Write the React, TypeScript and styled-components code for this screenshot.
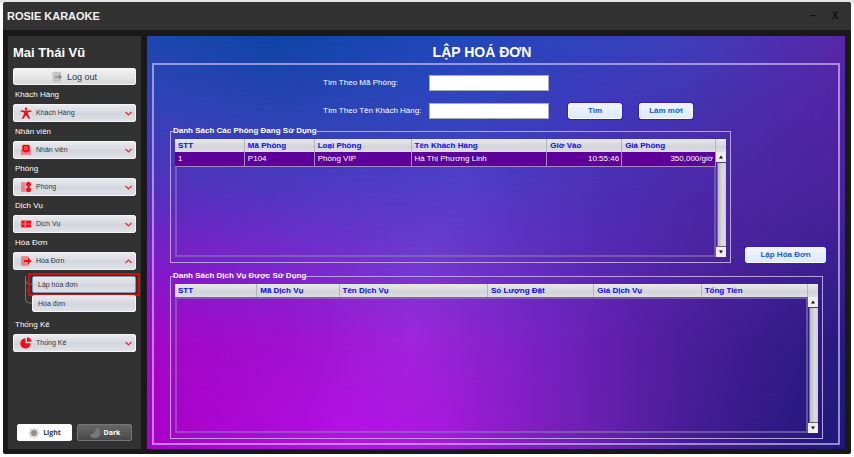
import React from "react";
import styled, { createGlobalStyle, css } from "styled-components";

const GlobalStyle = createGlobalStyle`
  *, *::before, *::after { box-sizing: border-box; }
  body { margin: 0; background: #fdfdfd; font: 8px/10px "Liberation Sans", Arial, sans-serif; color: #fff; }
  button, input { font: inherit; margin: 0; }
  button { cursor: pointer; }
`;

const Page = styled.div`
  min-height: 100vh;
  display: flex;
  padding: 2px 3px 3px;
  background: linear-gradient(#e6e6e6, #e6e6e6) top / 100% 3px no-repeat;
`;

const AppWindow = styled.div`
  flex: 1;
  display: flex;
  flex-direction: column;
  background: #191919;
  border-radius: 3px 3px 2px 2px;
  overflow: hidden;
`;

const TitleBar = styled.header`
  display: flex;
  align-items: center;
  justify-content: space-between;
  height: 28px;
  padding: 0 10px 0 4px;
  background: #323232;
`;

const AppName = styled.span`
  font-size: 11px;
  line-height: 14px;
  font-weight: bold;
  color: #f2f2f2;
`;

const WindowButtons = styled.div`
  display: flex;
  gap: 10px;
`;

const WindowButton = styled.button`
  width: 12px;
  padding: 0;
  border: 0;
  background: none;
  color: #111;
  font-size: 10px;
  line-height: 12px;
  font-weight: bold;
`;

const Body = styled.div`
  flex: 1;
  display: flex;
  gap: 6px;
  padding: 6px 6px 5px 5px;
`;

const Sidebar = styled.nav`
  flex: 0 0 133px;
  display: flex;
  flex-direction: column;
  padding: 9px 5px 8px;
  background: #323232;
`;

const UserName = styled.h2`
  margin: 0 0 7px;
  font-size: 13px;
  line-height: 16px;
  font-weight: bold;
`;

const softSurface = css`
  border: 1px solid #f4f5f7;
  border-radius: 2px;
  background: linear-gradient(#e9eaee, #d3d6dd 55%, #dfe1e6);
  color: #333a44;
`;

const LogoutButton = styled.button`
  ${softSurface}
  display: flex;
  align-items: center;
  justify-content: center;
  gap: 4px;
  height: 17px;
  padding: 0;
  background: linear-gradient(#f2f2f2, #d9d9d9);
  font-size: 9px;
  color: #2b3a48;
`;

const Group = styled.section`
  display: flex;
  flex-direction: column;
  padding-top: 5px;
`;

const GroupLabel = styled.h3`
  margin: 0 0 4px 2px;
  font-size: 8px;
  line-height: 10px;
  font-weight: normal;
`;

const MenuButton = styled.button`
  ${softSurface}
  display: flex;
  align-items: center;
  gap: 4px;
  height: 18px;
  padding: 0 3px 0 6px;
  font-size: 7px;
  text-align: left;
`;

const MenuText = styled.span`
  flex: 1;
`;

const SubMenu = styled.div`
  display: grid;
  grid-template-columns: 19px 1fr;
  padding: 6px 0 3px;
`;

const SubButtons = styled.div`
  display: flex;
  flex-direction: column;
  gap: 2px;
`;

const SubButton = styled.button<{ $active?: boolean }>`
  ${softSurface}
  position: relative;
  height: 17px;
  padding: 0 5px;
  font-size: 7px;
  text-align: left;
  ${(p) =>
    p.$active &&
    css`
      border-color: #7d9cb4;

      &::after {
        content: "";
        position: absolute;
        inset: -4px -5px;
        border: 2px solid #dc0a0a;
      }
    `}
`;

const ThemeRow = styled.div`
  display: grid;
  grid-template-columns: 1fr 1fr;
  gap: 5px;
  margin-top: auto;
  padding: 0 4px;
`;

const ThemeButton = styled.button<{ $dark?: boolean }>`
  display: flex;
  align-items: center;
  justify-content: center;
  gap: 3px;
  height: 17px;
  padding: 0;
  border: 1px solid ${(p) => (p.$dark ? "#777" : "#fff")};
  border-radius: 2px;
  background: ${(p) => (p.$dark ? "linear-gradient(#686868, #484848)" : "#fff")};
  color: ${(p) => (p.$dark ? "#fff" : "#2b3a48")};
  font: bold 7px/10px "Open Sans", sans-serif;
`;

const Main = styled.main`
  position: relative;
  isolation: isolate;
  flex: 1;
  min-width: 0;
  display: flex;
  flex-direction: column;
  padding: 8px 5px 4px;
`;

const Band = styled.div<{ $colors: string; $from: number; $to: number }>`
  position: absolute;
  inset: 0;
  z-index: -1;
  background: linear-gradient(90deg, ${(p) => p.$colors});
  mask-image: linear-gradient(transparent ${(p) => p.$from}%, #000 ${(p) => p.$to}%);
`;

const PageTitle = styled.h1`
  margin: 0;
  padding-right: 28px;
  font-size: 14px;
  line-height: 16px;
  font-weight: bold;
  text-align: center;
`;

const Content = styled.div`
  flex: 1;
  display: flex;
  flex-direction: column;
  margin-top: 3px;
  padding: 10px 12px 4px 16px;
  border: 2px solid rgba(205, 185, 235, 0.7);
`;

const SearchForm = styled.form`
  display: grid;
  grid-template-columns: 106px 120px 54px 54px;
  justify-content: center;
  align-items: center;
  row-gap: 12px;
  padding-right: 16px;
`;

const Field = styled.input`
  height: 16px;
  padding: 0 3px;
  border: 1px solid #a9a9b8;
  background: #fff;
  color: #222;
`;

const ActionButton = styled.button`
  height: 16px;
  padding: 0;
  border: 1px solid #fff;
  border-radius: 2px;
  outline: 1px solid #2a1fd0;
  background: linear-gradient(#f1f5ff, #dde9ff);
  color: #0d5fd8;
  font-weight: bold;
`;

const FormButton = styled(ActionButton)<{ $gap: number }>`
  margin-left: ${(p) => p.$gap}px;
  width: 54px;
`;

const RoomRow = styled.div`
  flex: 137 1 0;
  display: flex;
  gap: 14px;
  margin-top: 7px;
`;

const CreateButton = styled(ActionButton)`
  flex: 0 0 81px;
  align-self: flex-end;
`;

const Panel = styled.fieldset`
  flex: 1;
  min-width: 0;
  margin: 0;
  padding: 3px 4px 5px;
  border: 1px solid #b9a2dc;
`;

const ServicePanel = styled(Panel)`
  flex: 157 1 0;
  margin: 8px 3px 0 0;
`;

const Legend = styled.legend`
  margin-left: -2px;
  padding: 0;
  font-weight: bold;
`;

const Grid = styled.div`
  height: 100%;
  display: grid;
  grid-template-columns: 1fr 10px;
`;

const TableArea = styled.div`
  display: flex;
  flex-direction: column;
`;

const Table = styled.table`
  width: 100%;
  table-layout: fixed;
  border-collapse: separate;
  border-spacing: 0;
`;

const HeadCell = styled.th`
  height: 13px;
  padding: 0 3px;
  border-right: 1px solid #b4b6bc;
  background: linear-gradient(#e9eaee, #d2d4d9 60%, #dcdee2);
  color: #0a0af0;
  text-align: left;
  white-space: nowrap;
`;

const Cell = styled.td<{ $end?: boolean }>`
  height: 15px;
  padding: 0 2px 0 3px;
  border-right: 1px solid #a487c9;
  border-bottom: 1px solid #a487c9;
  background: #5c0099;
  text-align: ${(p) => (p.$end ? "right" : "left")};
  white-space: nowrap;
`;

const EmptyArea = styled.div<{ $top?: boolean }>`
  flex: 1;
  border: 2px solid rgba(140, 120, 185, 0.6);
  border-top-width: ${(p) => (p.$top ? "2px" : "0")};
`;

const ScrollColumn = styled.div`
  display: flex;
  flex-direction: column;
`;

const ScrollHead = styled.div`
  height: 13px;
  background: linear-gradient(#e9eaee, #d2d4d9 60%, #dcdee2);
`;

const ScrollButton = styled.button`
  display: flex;
  align-items: center;
  justify-content: center;
  height: 10px;
  padding: 0;
  border: 0;
  background: #eeeef0;
`;

const ScrollTrack = styled.div`
  flex: 1;
  margin-left: 1px;
  border-left: 1px solid #77777f;
  border-top: 1px solid #44444c;
  border-bottom: 1px solid #66666c;
  background: linear-gradient(90deg, #b9bac0, #dcdde1 60%, #cfd0d6);
`;

const bands = [
  { from: -1, to: 0, colors: "#1c48b0, #0e44a6 18%, #2048bc 45%, #3c40bc 75%, #5a26a8" },
  { from: 0, to: 20, colors: "#3840b8, #2c44b4 20%, #3444c0 45%, #4038bc 62%, #4630ac 80%, #5222a4" },
  { from: 20, to: 37, colors: "#5430bc, #5038c0 20%, #543ec8 45%, #4a2eb2 68%, #4c26a4 85%, #4a229c" },
  { from: 37, to: 54, colors: "#7c1cc8, #7828cc 20%, #703ad0 40%, #5a2ab8 62%, #4a229c 82%, #3a2090" },
  { from: 54, to: 74, colors: "#a406c8, #a010d0 20%, #a024dc 38%, #7c22c4 55%, #561ea4 72%, #3a1c8c 88%, #281a80" },
  { from: 74, to: 100, colors: "#a800c8, #b810e8 30%, #a816dc 43%, #7020b4 62%, #401c90 80%, #1c1878" },
];

const Chevron = ({ up }: { up?: boolean }) => (
  <svg width="7" height="5" viewBox="0 0 7 5" fill="none" stroke="#f02828" strokeWidth="1.2" aria-hidden>
    <path d={up ? "M.5 4 3.5 1l3 3" : "M.5 1l3 3 3-3"} />
  </svg>
);

const MenuIcon = ({ name }: { name: string }) => (
  <svg width="12" height="12" viewBox="0 0 12 12" fill="#fa0a14" aria-hidden>
    {name === "person" && (
      <>
        <circle cx="6" cy="1.7" r="1.2" />
        <path d="M.5 3.4h11v1.2L7.8 5.4l.4 2.2 2 4-1.3.3L6 8.3l-2.9 3.6-1.3-.3 2-4 .4-2.2L.5 4.6z" />
      </>
    )}
    {name === "staff" && (
      <>
        <path d="M.8 5.5h10.4V10a1 1 0 0 1-1 1H1.8a1 1 0 0 1-1-1z" opacity=".4" />
        <path d="M3.5.7h5A1.3 1.3 0 0 1 9.8 2v4.5L8 8.3H4L2.200 6.500V2A1.300 1.300 0 0 1 3.500.7z" />
        <path d="M4 3.200h4M4 5.200h4" stroke="#ffb0b0" strokeWidth=".7" />
      </>
    )}
    {name === "room" && (
      <>
        <rect x="1" y="1" width="4.500" height="10" rx="1" opacity=".4" />
        <circle cx="8.500" cy="3.200" r="2.500" />
        <circle cx="8.500" cy="8.800" r="2.500" />
        <path d="M7.800 4h1.400v4H7.800z" />
      </>
    )}
    {name === "service" && (
      <>
        <rect x=".8" y="2" width="10.400" height="8" rx="1" opacity=".45" />
        <path d="M1.500 3h3v2.400h-3zM1.500 6.600h3V9h-3zM6 3h5v2.400H6zM6 6.600h5V9H6z" />
      </>
    )}
    {name === "exit" && (
      <>
        <rect x="1" y="1" width="8" height="10" rx="1.500" opacity=".4" />
        <path d="M4 5h4V2.800L11.500 6 8 9.200V7H4z" />
      </>
    )}
    {name === "chart" && (
      <>
        <path d="M5.500 1.200v5h5.200A5.200 5.200 0 1 1 5.500 1.200z" />
        <path d="M7 .3a4.800 4.800 0 0 1 4.500 4.500H7z" />
      </>
    )}
  </svg>
);

const LogoutIcon = () => (
  <svg width="11" height="12" viewBox="0 0 11 12" aria-hidden>
    <rect x=".5" y=".8" width="8.500" height="10.400" rx="1" fill="#c4c4c4" />
    <path d="M3 5.200h4V3.200L10.200 6 7 8.800v-2H3z" fill="#8b8b8b" />
  </svg>
);

const SunIcon = () => (
  <svg width="12" height="12" viewBox="0 0 12 12" aria-hidden>
    <path
      d="M6 0l1.300 2.200L10.200 1.800 9.800 4.700 12 6 9.800 7.300l.4 2.900-2.900-.4L6 12 4.700 9.800l-2.900.4.4-2.900L0 6l2.200-1.300-.4-2.900 2.900.4z"
      fill="#d4d4d4"
    />
    <circle cx="6" cy="6" r="2.900" fill="#8f8f8f" />
  </svg>
);

const MoonIcon = () => (
  <svg width="12" height="12" viewBox="0 0 12 12" aria-hidden>
    <path d="M7 .5A6 6 0 0 1 .8 7.200 5.400 5.400 0 1 0 7 .5z" fill="#777" />
  </svg>
);

const Arrow = ({ up }: { up?: boolean }) => (
  <svg width="4" height="4" viewBox="0 0 4 4" aria-hidden>
    <path d={up ? "M0 3.500 2 .5l2 3z" : "M0 .5h4l-2 3z"} fill="#111" />
  </svg>
);

const Branches = () => (
  <svg width="19" height="36" viewBox="0 0 19 36" fill="none" stroke="#777" aria-hidden>
    <path d="M12.500 0v23q0 4 4 4H19M12.500 4q0 4 4 4H19" />
  </svg>
);

const Scrollbar = () => (
  <ScrollColumn>
    <ScrollHead />
    <ScrollButton type="button" aria-label="Cuộn lên">
      <Arrow up />
    </ScrollButton>
    <ScrollTrack />
    <ScrollButton type="button" aria-label="Cuộn xuống">
      <Arrow />
    </ScrollButton>
  </ScrollColumn>
);

type Column = { title: string; width: number; end?: boolean };

const DataGrid = ({ columns, rows }: { columns: Column[]; rows: string[][] }) => {
  const total = columns.reduce((sum, c) => sum + c.width, 0);
  return (
    <Grid>
      <TableArea>
        <Table>
          <colgroup>
            {columns.map((c) => (
              <col key={c.title} style={{ width: `${(c.width / total) * 100}%` }} />
            ))}
          </colgroup>
          <thead>
            <tr>
              {columns.map((c) => (
                <HeadCell key={c.title} scope="col">
                  {c.title}
                </HeadCell>
              ))}
            </tr>
          </thead>
          <tbody>
            {rows.map((row) => (
              <tr key={row[0]}>
                {row.map((value, i) => (
                  <Cell key={columns[i].title} $end={columns[i].end}>
                    {value}
                  </Cell>
                ))}
              </tr>
            ))}
          </tbody>
        </Table>
        <EmptyArea $top={rows.length === 0} />
      </TableArea>
      <Scrollbar />
    </Grid>
  );
};

const roomColumns: Column[] = [
  { title: "STT", width: 70 },
  { title: "Mã Phòng", width: 70 },
  { title: "Loại Phòng", width: 97 },
  { title: "Tên Khách Hàng", width: 136 },
  { title: "Giờ Vào", width: 75, end: true },
  { title: "Giá Phòng", width: 94, end: true },
];

const serviceColumns: Column[] = [
  { title: "STT", width: 82 },
  { title: "Mã Dịch Vụ", width: 82 },
  { title: "Tên Dịch Vụ", width: 148 },
  { title: "Số Lượng Đặt", width: 106 },
  { title: "Giá Dịch Vụ", width: 107 },
  { title: "Tổng Tiền", width: 106 },
];

const menu = [
  { label: "Khách Hàng", icon: "person" },
  { label: "Nhân viên", icon: "staff" },
  { label: "Phòng", icon: "room" },
  { label: "Dịch Vụ", icon: "service" },
  { label: "Hóa Đơn", icon: "exit", items: ["Lập hóa đơn", "Hóa đơn"] },
  { label: "Thống Kê", icon: "chart" },
];

export default function App() {
  return (
    <Page>
      <GlobalStyle />
      <AppWindow>
        <TitleBar>
          <AppName>ROSIE KARAOKE</AppName>
          <WindowButtons>
            <WindowButton type="button">–</WindowButton>
            <WindowButton type="button">X</WindowButton>
          </WindowButtons>
        </TitleBar>
        <Body>
          <Sidebar>
            <UserName>Mai Thái Vũ</UserName>
            <LogoutButton type="button">
              <LogoutIcon />
              Log out
            </LogoutButton>
            {menu.map((group) => (
              <Group key={group.label}>
                <GroupLabel>{group.label}</GroupLabel>
                <MenuButton type="button" aria-expanded={!!group.items}>
                  <MenuIcon name={group.icon} />
                  <MenuText>{group.label}</MenuText>
                  <Chevron up={!!group.items} />
                </MenuButton>
                {group.items && (
                  <SubMenu>
                    <Branches />
                    <SubButtons>
                      {group.items.map((item, i) => (
                        <SubButton key={item} type="button" $active={i === 0}>
                          {item}
                        </SubButton>
                      ))}
                    </SubButtons>
                  </SubMenu>
                )}
              </Group>
            ))}
            <ThemeRow>
              <ThemeButton type="button">
                <SunIcon />
                Light
              </ThemeButton>
              <ThemeButton type="button" $dark>
                <MoonIcon />
                Dark
              </ThemeButton>
            </ThemeRow>
          </Sidebar>
          <Main>
            {bands.map((band) => (
              <Band key={band.to} $colors={band.colors} $from={band.from} $to={band.to} />
            ))}
            <PageTitle>LẬP HOÁ ĐƠN</PageTitle>
            <Content>
              <SearchForm onSubmit={(e: React.FormEvent) => e.preventDefault()}>
                <label htmlFor="room">Tìm Theo Mã Phòng:</label>
                <Field id="room" />
                <span />
                <span />
                <label htmlFor="customer">Tìm Theo Tên Khách Hàng:</label>
                <Field id="customer" />
                <FormButton type="submit" $gap={19}>
                  Tìm
                </FormButton>
                <FormButton type="reset" $gap={36}>
                  Làm mới
                </FormButton>
              </SearchForm>
              <RoomRow>
                <Panel>
                  <Legend>Danh Sách Các Phòng Đang Sử Dụng</Legend>
                  <DataGrid
                    columns={roomColumns}
                    rows={[["1", "P104", "Phòng VIP", "Hà Thị Phương Linh", "10:55:46", "350,000/giờ"]]}
                  />
                </Panel>
                <CreateButton type="button">Lập Hóa Đơn</CreateButton>
              </RoomRow>
              <ServicePanel>
                <Legend>Danh Sách Dịch Vụ Được Sử Dụng</Legend>
                <DataGrid columns={serviceColumns} rows={[]} />
              </ServicePanel>
            </Content>
          </Main>
        </Body>
      </AppWindow>
    </Page>
  );
}
